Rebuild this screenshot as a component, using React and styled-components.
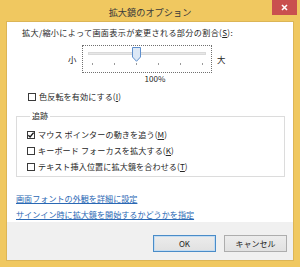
import styled, { createGlobalStyle } from "styled-components"

const Global = createGlobalStyle`
  html, body {
    margin: 0;
    padding: 0;
    background: #f0c860;
  }
  body {
    font-family: "Noto Sans CJK JP", "Noto Sans", sans-serif;
    color: #262626;
  }
`

function CheckBox({ checked }) {
  return (
    <Box>
      {checked && (
        <svg width="8" height="8" viewBox="0 0 8 8">
          <path d="M1.3 4.2 L3.1 6 L6.6 1.6" fill="none" stroke="#1a1a1a" strokeWidth="1.4" />
        </svg>
      )}
    </Box>
  )
}

function Check({ checked, children }) {
  return (
    <CheckRow>
      <CheckBox checked={checked} />
      <span>{children}</span>
    </CheckRow>
  )
}

export default function App() {
  const ticks = [0, 1, 2, 3, 4, 5]

  return (
    <Window>
      <Global />
      <TitleBar>
        拡大鏡のオプション
        <Close>
          <svg width="7" height="7" viewBox="0 0 7 7">
            <path d="M1 1 L6 6 M6 1 L1 6" stroke="#fff" strokeWidth="1.6" />
          </svg>
        </Close>
      </TitleBar>
      <Client>
        <Content>
          <Prompt>拡大/縮小によって画面表示が変更される部分の割合(<u>S</u>):</Prompt>
          <SliderRow>
            <SizeLabel>小</SizeLabel>
            <SliderBox>
              <Track />
              <Ticks>
                {ticks.map(t => <Tick key={t} />)}
              </Ticks>
              <Thumb width="9" height="15" viewBox="0 0 9 15">
                <path d="M0.5 0.5 H8.5 V10 L4.5 14.3 L0.5 10 Z" fill="#dce8f6" stroke="#5f8fcc" />
              </Thumb>
            </SliderBox>
            <SizeLabel>大</SizeLabel>
          </SliderRow>
          <Percent>100%</Percent>
          <InvertRow>
            <Check>色反転を有効にする(<u>I</u>)</Check>
          </InvertRow>
          <Group>
            <Legend>追跡</Legend>
            <Check checked>マウス ポインターの動きを追う(<u>M</u>)</Check>
            <Check>キーボード フォーカスを拡大する(<u>K</u>)</Check>
            <Check>テキスト挿入位置に拡大鏡を合わせる(<u>T</u>)</Check>
          </Group>
          <Links>
            <Link href="#">画面フォントの外観を詳細に設定</Link>
            <Link href="#">サインイン時に拡大鏡を開始するかどうかを指定</Link>
          </Links>
        </Content>
        <Footer>
          <Button primary>OK</Button>
          <Button>キャンセル</Button>
        </Footer>
      </Client>
    </Window>
  )
}

const Window = styled.div`
  width: 300px;
  height: 267px;
  box-sizing: border-box;
  padding: 0 7px 7px 7px;
  background: #f0c860;
  display: flex;
  flex-direction: column;
  overflow: hidden;
`

const TitleBar = styled.div`
  position: relative;
  height: 22px;
  flex: none;
  display: flex;
  align-items: center;
  justify-content: center;
  font-size: 9.2px;
  color: #3a3a3a;
  padding-top: 1px;
  box-sizing: border-box;
`

const Close = styled.div`
  position: absolute;
  top: 0;
  right: -4px;
  width: 25px;
  height: 15px;
  background: #c9504f;
  display: flex;
  align-items: center;
  justify-content: center;
`

const Client = styled.div`
  flex: 1;
  background: #fff;
  display: flex;
  flex-direction: column;
  box-shadow: 0 0 0 1px #dcb556;
`

const Content = styled.div`
  flex: 1;
  padding: 5px 8px 0 9px;
  font-size: 8.1px;
  line-height: 12px;
`

const Prompt = styled.div`
  padding-left: 6px;
  letter-spacing: 0.35px;
`

const SliderRow = styled.div`
  display: flex;
  align-items: center;
  margin-top: 6px;
  padding-left: 52px;
  height: 28px;
`

const SizeLabel = styled.span`
  width: 9px;
  font-size: 8.4px;
  margin: 0 5px 0 0;

  & + div + & {
    margin: 0 0 0 5px;
  }
`

const SliderBox = styled.div`
  position: relative;
  width: 128px;
  height: 26px;
  border: 1px dotted #707070;
`

const Track = styled.div`
  margin: 6px 5px 0 5px;
  height: 3px;
  background: #e7e7e7;
  border: 1px solid #dadada;
  box-sizing: border-box;
`

const Ticks = styled.div`
  display: flex;
  justify-content: space-between;
  margin-top: 8px;
  padding: 0 8px 0 9px;
`

const Tick = styled.span`
  width: 1px;
  height: 2px;
  background: #9a9a9a;
`

const Thumb = styled.svg`
  position: absolute;
  left: 49px;
  top: 1px;
`

const Percent = styled.div`
  width: 286px;
  margin-left: -9px;
  padding-left: 10px;
  box-sizing: border-box;
  text-align: center;
  height: 12px;
  line-height: 12px;
`

const InvertRow = styled.div`
  margin-top: 6px;
  padding-left: 12px;
`

const CheckRow = styled.div`
  display: flex;
  align-items: center;
  gap: 3px;
  height: 12px;
  letter-spacing: 0.1px;
`

const Box = styled.span`
  width: 8px;
  height: 8px;
  border: 1px solid #3a3a3a;
  box-sizing: border-box;
  display: flex;
  align-items: center;
  justify-content: center;
  background: #fff;

  svg { margin: -1px; }
`

const Group = styled.fieldset`
  margin: 7px 0 0 0;
  padding: 7px 5px 3px 10px;
  border: 1px solid #dcdcdc;
  min-width: 0;
  display: flex;
  flex-direction: column;
  gap: 4px;
`

const Legend = styled.legend`
  padding: 0 2px;
  margin-left: 3px;
  line-height: 12px;
`

const Links = styled.div`
  display: flex;
  flex-direction: column;
  gap: 2px;
  margin-top: 15px;
`

const Link = styled.a`
  color: #2a68b4;
  text-decoration: underline;
  text-underline-offset: 1px;
  line-height: 14px;
  width: fit-content;
`

const Footer = styled.div`
  height: 38px;
  flex: none;
  background: #f0f0f0;
  display: flex;
  justify-content: flex-end;
  gap: 8px;
  padding: 13px 6px 0 0;
  box-sizing: border-box;
`

const Button = styled.button`
  width: 63px;
  height: 17px;
  margin: 0;
  padding: 0;
  font-family: "Noto Sans CJK JP", "Noto Sans", sans-serif;
  font-size: 8px;
  color: #222;
  background: linear-gradient(#ececec, #e1e1e1);
  border: 1px solid ${({ primary }) => primary ? "#4a8cc8" : "#adadad"};
  box-shadow: ${({ primary }) => primary ? "inset 0 0 0 1px #c3dcf2" : "none"};
  display: flex;
  align-items: center;
  justify-content: center;
`
